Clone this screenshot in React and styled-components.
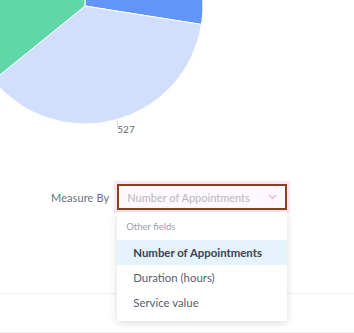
import React from "react";
import styled, { createGlobalStyle } from "styled-components";

const Global = createGlobalStyle`
  html, body { margin: 0; padding: 0; background: #ffffff; }
  body { font-family: Lato, "Open Sans", sans-serif; overflow: hidden; }
`;

const Page = styled.div`
  width: 354px;
  height: 333px;
  position: relative;
  overflow: hidden;
  background: #fff;
`;

const ChartArea = styled.div`
  height: 140px;
  svg { display: block; }
`;

const ControlRow = styled.div`
  display: flex;
  align-items: center;
  margin-top: 44px;
  padding-left: 51px;
  gap: 8px;
`;

const Label = styled.span`
  font-size: 11px;
  color: #6b6f7e;
  letter-spacing: 0.1px;
`;

const SelectWrap = styled.div`
  position: relative;
`;

const SelectBox = styled.div`
  width: 170px;
  height: 26px;
  box-sizing: border-box;
  border: 2px solid #86411f;
  box-shadow: 0 0 0 3px #fde6f4;
  background: #fff8fc;
  display: flex;
  align-items: center;
  justify-content: space-between;
  padding: 0 8px 0 8px;
`;

const Placeholder = styled.span`
  font-size: 11px;
  color: #b4b7c2;
`;

const Menu = styled.div`
  position: absolute;
  top: 28px;
  left: 0;
  width: 170px;
  background: #fff;
  box-shadow: 0 2px 8px rgba(0, 0, 0, 0.14);
  padding: 7px 0 6px;
  z-index: 2;
`;

const GroupTitle = styled.div`
  font-size: 9.5px;
  color: #9c9ea8;
  padding: 0 9px;
  height: 16px;
  line-height: 16px;
  margin-bottom: 5px;
`;

const Option = styled.div`
  height: 25px;
  line-height: 25px;
  padding: 0 16px;
  font-size: 11.4px;
  color: ${(p) => (p.$active ? "#3d4152" : "#5a5e6d")};
  font-weight: ${(p) => (p.$active ? 700 : 400)};
  background: ${(p) => (p.$active ? "#e5f3fc" : "transparent")};
`;

const Footer = styled.div`
  position: absolute;
  left: 0;
  right: 0;
  top: 293px;
  height: 38px;
  border-top: 1px solid #f0f0f2;
  border-bottom: 1px solid #f0f0f2;
`;

function polar(cx, cy, r, deg) {
  const a = (deg * Math.PI) / 180;
  return [cx + r * Math.cos(a), cy + r * Math.sin(a)];
}

function slice(cx, cy, r, a0, a1) {
  const [x0, y0] = polar(cx, cy, r, a0);
  const [x1, y1] = polar(cx, cy, r, a1);
  const large = a1 - a0 > 180 ? 1 : 0;
  return `M${cx},${cy} L${x0},${y0} A${r},${r} 0 ${large} 1 ${x1},${y1} Z`;
}

const Pie = () => {
  const cx = 85;
  const cy = 6;
  const r = 118;
  return (
    <svg width="354" height="140" viewBox="0 0 354 140">
      <path d={slice(cx, cy, r, -90, 9)} fill="#6394f7" stroke="#fff" strokeWidth="1" />
      <path d={slice(cx, cy, r, 9, 141)} fill="#d2dffc" stroke="#fff" strokeWidth="1" />
      <path d={slice(cx, cy, r, 141, 270)} fill="#5fd7a8" stroke="#fff" strokeWidth="1" />
      <line x1="117.5" y1="121" x2="117.5" y2="127" stroke="#d8d8dc" strokeWidth="1" />
      <text x="126" y="133" fontSize="10" fill="#6a6a6a" textAnchor="middle" fontFamily="Lato, sans-serif">527</text>
    </svg>
  );
};

const Chevron = () => (
  <svg width="9" height="6" viewBox="0 0 9 6">
    <path d="M1 1 L4.5 4.5 L8 1" fill="none" stroke="#eab1cd" strokeWidth="1.1" />
  </svg>
);

export default function App() {
  return (
    <Page>
      <Global />
      <ChartArea>
        <Pie />
      </ChartArea>
      <ControlRow>
        <Label>Measure By</Label>
        <SelectWrap>
          <SelectBox>
            <Placeholder>Number of Appointments</Placeholder>
            <Chevron />
          </SelectBox>
          <Menu>
            <GroupTitle>Other fields</GroupTitle>
            <Option $active>Number of Appointments</Option>
            <Option>Duration (hours)</Option>
            <Option>Service value</Option>
          </Menu>
        </SelectWrap>
      </ControlRow>
      <Footer />
    </Page>
  );
}
